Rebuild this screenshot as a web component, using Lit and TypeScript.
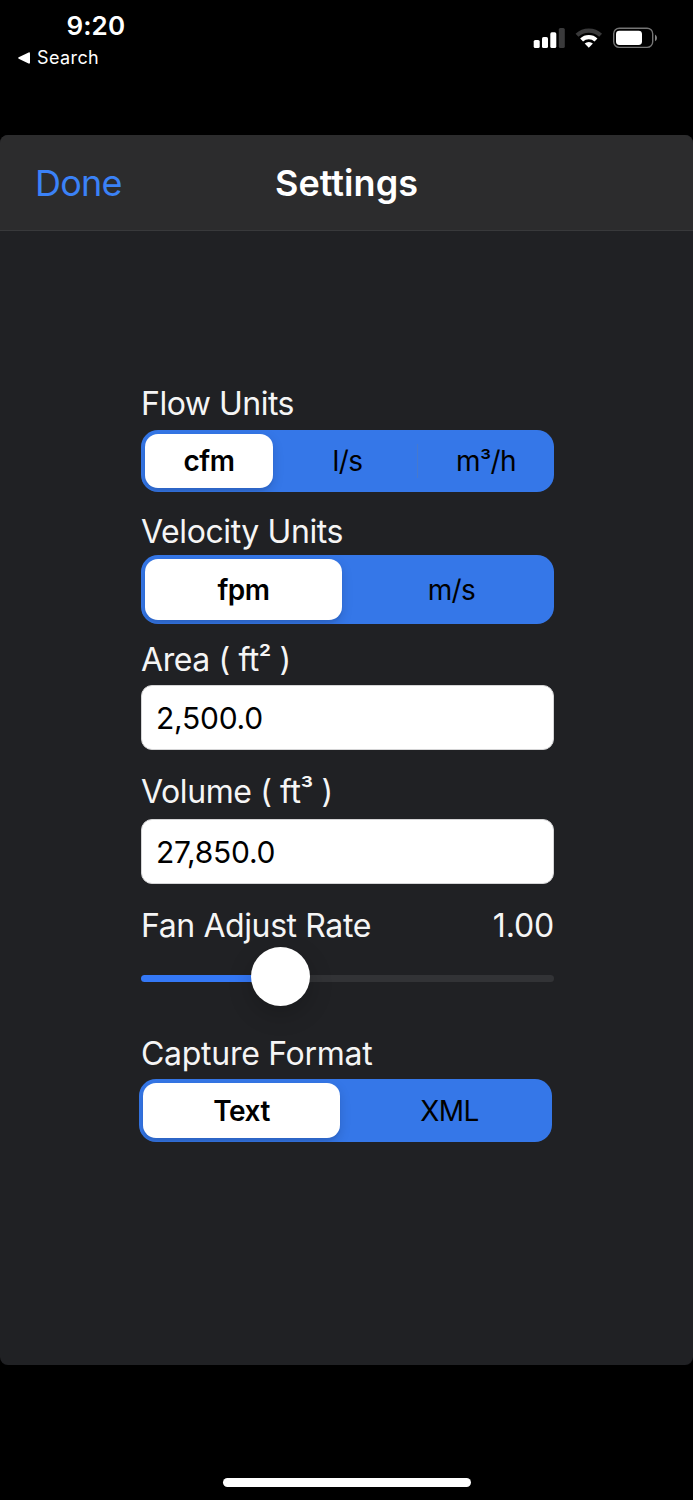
import { LitElement, html, css } from "lit";
import { customElement, property, state } from "lit/decorators.js";
import { classMap } from "lit/directives/class-map.js";
import { styleMap } from "lit/directives/style-map.js";

@customElement("status-bar")
class StatusBar extends LitElement {
  static styles = css`
    :host {
      display: flex;
      justify-content: space-between;
      height: 135px;
      box-sizing: border-box;
      padding: 13px 36px 0 18px;
      color: #fff;
    }
    .time {
      margin-left: 48.5px;
      font-size: 26px;
      line-height: 26px;
      font-weight: 580;
      letter-spacing: 0.1px;
    }
    .back {
      display: flex;
      align-items: center;
      gap: 7px;
      margin-top: 7px;
      font-size: 18px;
      line-height: 23px;
      letter-spacing: 0.4px;
    }
    .icons {
      margin-top: 14px;
      height: 22px;
    }
    svg {
      display: block;
    }
  `;
  render() {
    return html`
      <div>
        <div class="time">9:20</div>
        <div class="back">
          <svg width="12" height="12" viewBox="0 0 12 12">
            <path d="M.7 5.3 10.6.4Q12 0 12 1.4V10.6Q12 12 10.6 11.6L.7 6.7Q-.3 6 .7 5.3Z" fill="#fff" />
          </svg>
          <span>Search</span>
        </div>
      </div>
      <svg class="icons" width="124" height="22" viewBox="533 27 124 22">
        <rect x="533.7" y="40" width="6" height="8" rx="1.6" fill="#fff" />
        <rect x="542" y="37" width="6" height="11" rx="1.6" fill="#fff" />
        <rect x="550.3" y="32.3" width="6" height="15.7" rx="1.6" fill="#fff" />
        <rect x="558.8" y="28" width="6" height="20" rx="1.6" fill="#3a3a3b" />
        <path d="M577 35.3A17.2 17.2 0 0 1 600.6 35.3" fill="none" stroke="#3a3a3b" stroke-width="4.2" />
        <path d="M581.6 40A10.4 10.4 0 0 1 596 40" fill="none" stroke="#fff" stroke-width="4.2" />
        <path d="M584.7 43.6A6 6 0 0 1 592.9 43.6L588.8 47.8Z" fill="#fff" />
        <rect x="613.7" y="28.2" width="39" height="19.2" rx="5.6" fill="none" stroke="#757575" stroke-width="1.4" />
        <rect x="616" y="30.7" width="26" height="14.3" rx="3.4" fill="#fff" />
        <path d="M655 34.5Q657 35.6 657 37.9T655 41.3Z" fill="#858585" />
      </svg>
    `;
  }
}

@customElement("segmented-control")
class SegmentedControl extends LitElement {
  @property({ attribute: false }) options: string[] = [];
  @property({ attribute: false }) columns = "1fr 1fr";
  @property({ type: Number }) selected = 0;
  static styles = css`
    :host {
      display: block;
      height: 100%;
    }
    .track {
      display: grid;
      height: 100%;
      box-sizing: border-box;
      padding: 4px;
      border-radius: 17px;
      background: #3577e8;
      overflow: hidden;
    }
    .segment {
      display: flex;
      align-items: center;
      justify-content: center;
      box-sizing: border-box;
      padding-left: 5px;
      border-radius: 13px;
      font-size: 28px;
      line-height: 34px;
      letter-spacing: -0.6px;
      color: #000;
      cursor: pointer;
    }
    .segment.half {
      padding-left: 11px;
      letter-spacing: -0.6px;
    }
    .segment.divided {
      border-radius: 0;
      background: linear-gradient(#4679ce, #4679ce) left center / 1px 34px no-repeat;
    }
    .segment.on {
      padding-left: 0;
      background: #fff;
      font-weight: 590;
      letter-spacing: -0.5px;
      box-shadow: 0 4px 12px rgba(0, 0, 0, 0.14), 0 3px 2px rgba(0, 0, 0, 0.05);
    }
    .sup {
      font-size: 25px;
      line-height: 0;
      vertical-align: 1px;
    }
  `;
  render() {
    return html`<div class="track" style=${styleMap({ gridTemplateColumns: this.columns })}>
      ${this.options.map(
        (label, i) => html`<div
          class=${classMap({
            segment: true,
            half: this.options.length === 2,
            on: i === this.selected,
            divided: i > 0 && i !== this.selected && i - 1 !== this.selected,
          })}
          @click=${() => (this.selected = i)}
        >
          <span>${label.split(/([²³])/).map((part) => (/[²³]/.test(part) ? html`<span class="sup">${part}</span>` : part))}</span>
        </div>`
      )}
    </div>`;
  }
}

@customElement("app-root")
class AppRoot extends LitElement {
  @state() rate = 0.3375;
  static styles = css`
    :host {
      display: flex;
      flex-direction: column;
      height: 1500px;
      background: #000;
      font-family: Inter, "Liberation Sans", sans-serif;
    }
    .sheet {
      height: 1229.5px;
      border-radius: 8px;
      background: #202124;
      overflow: hidden;
    }
    .nav {
      display: grid;
      grid-template-columns: 1fr auto 1fr;
      align-items: center;
      height: 96px;
      box-sizing: border-box;
      padding: 0 35px;
      border-bottom: 1px solid #38393b;
      background: #2c2c2d;
      font-size: 36px;
      line-height: 44px;
    }
    .done {
      color: #3b82f7;
      letter-spacing: -0.75px;
    }
    .title {
      color: #fff;
      font-weight: 600;
      letter-spacing: 0.05px;
    }
    .form {
      width: 413px;
      margin: 152px 0 0 141px;
    }
    .label {
      display: flex;
      justify-content: space-between;
      height: 40px;
      font-size: 32px;
      line-height: 41px;
      letter-spacing: -0.4px;
      color: #f5f5f5;
      white-space: pre;
    }
    .label.snug {
      letter-spacing: -0.5px;
    }
    .label.loose {
      letter-spacing: -0.28px;
    }
    .sup {
      font-size: 28px;
      font-weight: 450;
      line-height: 0;
      vertical-align: 3px;
    }
    .number {
      letter-spacing: -0.15px;
    }
    .flow {
      height: 62px;
      margin: 7px 0 19px;
    }
    .velocity {
      height: 69px;
      margin: 4px 0 15px;
    }
    .field {
      display: flex;
      align-items: center;
      height: 65px;
      box-sizing: border-box;
      padding-left: 14px;
      border: 1px solid #d5d5d6;
      border-radius: 11px;
      background: #fff;
      color: #000;
      font-size: 30px;
      line-height: 36px;
      letter-spacing: -0.25px;
    }
    .area {
      margin: 6px 0 21px;
    }
    .volume {
      margin: 8px 0 21px;
    }
    .slider {
      display: flex;
      align-items: center;
      height: 59px;
      margin: 2px 0 27px;
    }
    .fill,
    .rest {
      height: 7px;
      margin-top: 3px;
    }
    .fill {
      margin-right: -29px;
      border-radius: 4px 0 0 4px;
      background: #3478f6;
    }
    .rest {
      flex: 1;
      margin-left: -29px;
      border-radius: 0 4px 4px 0;
      background: #323336;
    }
    .thumb {
      z-index: 1;
      width: 59px;
      height: 59px;
      flex: none;
      border-radius: 50%;
      background: #fff;
      box-shadow: 0 8px 24px rgba(0, 0, 0, 0.2);
    }
    .capture {
      height: 63px;
      margin: 6px 2px 0 -2px;
    }
    .home {
      width: 248px;
      height: 8.5px;
      margin: 113.5px 0 0 222.5px;
      border-radius: 5px;
      background: #fff;
    }
  `;
  render() {
    return html`
      <status-bar></status-bar>
      <main class="sheet">
        <header class="nav">
          <span class="done">Done</span>
          <span class="title">Settings</span>
        </header>
        <section class="form">
          <div class="label snug"><span>Flow Units</span></div>
          <div class="flow">
            <segmented-control .options=${["cfm", "l/s", "m³/h"]} .columns=${"128px 1fr 133px"}></segmented-control>
          </div>
          <div class="label"><span>Velocity Units</span></div>
          <div class="velocity">
            <segmented-control .options=${["fpm", "m/s"]} .columns=${"197px 1fr"}></segmented-control>
          </div>
          <div class="label"><span>Area ( ft<span class="sup">²</span> )</span></div>
          <div class="field area"><span>2,500.0</span></div>
          <div class="label"><span>Volume ( ft<span class="sup">³</span> )</span></div>
          <div class="field volume"><span>27,850.0</span></div>
          <div class="label"><span>Fan Adjust Rate</span><span class="number">1.00</span></div>
          <div class="slider">
            <div class="fill" style=${styleMap({ width: `${this.rate * 413}px` })}></div>
            <div class="thumb"></div>
            <div class="rest"></div>
          </div>
          <div class="label loose"><span>Capture Format</span></div>
          <div class="capture">
            <segmented-control .options=${["Text", "XML"]} .columns=${"197px 1fr"}></segmented-control>
          </div>
        </section>
      </main>
      <div class="home"></div>
    `;
  }
}
